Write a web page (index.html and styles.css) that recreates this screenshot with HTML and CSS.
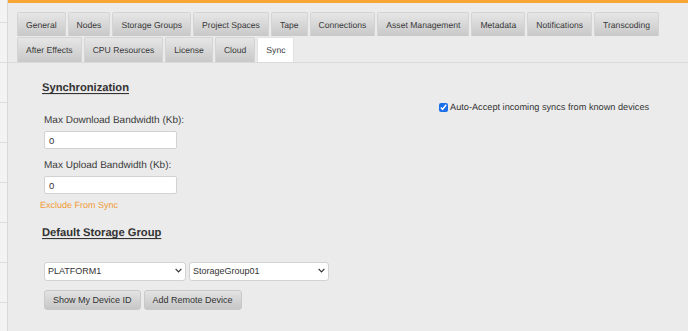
FILE: index.html
```html
<!DOCTYPE html>
<html lang="en">
<head>
    <meta charset="UTF-8" />
    <title>Settings - Sync</title>
    <link rel="stylesheet" href="styles.css">
</head>
<body>
<aside class="sidebar"></aside>

<main>
    <nav class="tabs">
        <div class="tab-row">
            <a class="tab" href="#">General</a>
            <a class="tab" href="#">Nodes</a>
            <a class="tab" href="#">Storage Groups</a>
            <a class="tab" href="#">Project Spaces</a>
            <a class="tab" href="#">Tape</a>
            <a class="tab" href="#">Connections</a>
            <a class="tab" href="#">Asset Management</a>
            <a class="tab" href="#">Metadata</a>
            <a class="tab" href="#">Notifications</a>
            <a class="tab" href="#">Transcoding</a>
        </div>
        <div class="tab-row">
            <a class="tab" href="#">After Effects</a>
            <a class="tab" href="#">CPU Resources</a>
            <a class="tab" href="#">License</a>
            <a class="tab" href="#">Cloud</a>
            <a class="tab active" href="#">Sync</a>
        </div>
    </nav>

    <section class="content">
        <div class="sync-row">
            <div class="sync-fields">
                <h2 class="section-title">Synchronization</h2>
                <label class="field-label first" for="maxDown">Max Download Bandwidth (Kb):</label>
                <input class="field" type="text" id="maxDown" value="0">
                <label class="field-label" for="maxUp">Max Upload Bandwidth (Kb):</label>
                <input class="field" type="text" id="maxUp" value="0">
                <a class="exclude-link" href="#">Exclude From Sync</a>
            </div>
            <label class="auto-accept">
                <input type="checkbox" checked>
                Auto-Accept incoming syncs from known devices
            </label>
        </div>

        <h2 class="section-title storage-title">Default Storage Group</h2>
        <div class="select-row">
            <div class="select-wrap platform">
                <select>
                    <option>PLATFORM1</option>
                </select>
                <svg class="chevron" width="7" height="5" viewBox="0 0 7 5"><path d="M0.6 0.8 L3.5 3.8 L6.4 0.8" fill="none" stroke="#333" stroke-width="1.2"/></svg>
            </div>
            <div class="select-wrap group">
                <select>
                    <option>StorageGroup01</option>
                </select>
                <svg class="chevron" width="7" height="5" viewBox="0 0 7 5"><path d="M0.6 0.8 L3.5 3.8 L6.4 0.8" fill="none" stroke="#333" stroke-width="1.2"/></svg>
            </div>
        </div>
        <div class="button-row">
            <button type="button">Show My Device ID</button>
            <button type="button">Add Remote Device</button>
        </div>
    </section>
</main>
</body>
</html>
```

FILE: styles.css
```css
body {
    font-family: 'Liberation Sans', Arial, sans-serif;
    text-rendering: geometricPrecision;
    margin: 0;
    padding: 0;
    background-color: #ebebeb;
    color: #333;
    display: flex;
    min-height: 100vh;
}

.sidebar {
    width: 7px;
    flex-shrink: 0;
    background-color: #f3f3f3;
    border-right: 1px solid #d9d9d9;
    background-image: repeating-linear-gradient(to bottom, transparent 0, transparent 22px, #dcdcdc 22px, #dcdcdc 23px, transparent 23px, transparent 40px);
}

main {
    flex-grow: 1;
    min-width: 0;
    border-top: 3px solid #f8a531;
    background-color: #ebebeb;
}

.tabs {
    padding: 9px 0 0 9px;
    border-bottom: 1px solid #dadada;
    display: flex;
    flex-direction: column;
    gap: 1px;
}

.tab-row {
    display: flex;
    gap: 2px;
}

.tab {
    display: block;
    flex-shrink: 0;
    white-space: nowrap;
    height: 24px;
    line-height: 24px;
    padding: 0 8px;
    font-size: 8.6px;
    color: #3a3a3a;
    text-decoration: none;
    background: linear-gradient(to bottom, #e6e6e6, #c8c8c8);
    border: 1px solid #d4d4d4;
    border-bottom: none;
    border-radius: 2px 2px 0 0;
    box-sizing: border-box;
}

.tab-row + .tab-row .tab {
    height: 25px;
    line-height: 25px;
}

.tab.active {
    background: #fff;
    border-color: #e2e2e2;
}

.content {
    padding: 18px 0 20px 32px;
}

.sync-row {
    display: flex;
}

.sync-fields {
    flex: 0 0 399px;
    display: flex;
    flex-direction: column;
    align-items: flex-start;
}

.section-title {
    margin: 0 0 0 2px;
    font-size: 11.2px;
    line-height: 14px;
    font-weight: bold;
    color: #333;
    text-decoration: underline;
    text-underline-offset: 2px;
    text-shadow: 0 1px 0 rgba(0,0,0,0.08);
}

.field-label {
    display: block;
    margin: 11px 0 0 4px;
    font-size: 10px;
    line-height: 12px;
    color: #3a3a3a;
}

.field-label.first {
    margin-top: 20px;
}

.field {
    margin: 4px 0 0 4px;
    width: 133px;
    height: 18px;
    padding: 0 4px;
    border: 1px solid #d2d2d2;
    border-radius: 2px;
    background: #fff;
    font-family: inherit;
    font-size: 9.5px;
    color: #333;
    box-sizing: border-box;
}

.exclude-link {
    margin-top: 5px;
    font-size: 9px;
    line-height: 12px;
    color: #ef9a36;
    text-decoration: none;
}

.auto-accept {
    display: flex;
    align-items: center;
    gap: 2px;
    padding-top: 20px;
    height: 12px;
    font-size: 9.2px;
    line-height: 12px;
    color: #333;
    white-space: nowrap;
}

.auto-accept input {
    width: 9px;
    height: 9px;
    margin: 0;
    accent-color: #1a6fe8;
}

.storage-title {
    margin-top: 15px;
}

.select-row {
    display: flex;
    gap: 3px;
    margin: 21px 0 0 4px;
}

.select-wrap {
    position: relative;
}

.select-wrap select {
    appearance: none;
    -webkit-appearance: none;
    height: 19px;
    padding: 0 14px 0 3px;
    border: 1px solid #d2d2d2;
    border-radius: 3px;
    background: #fff;
    font-family: inherit;
    font-size: 9px;
    color: #333;
    box-sizing: border-box;
}

.select-wrap.platform select {
    width: 142px;
}

.select-wrap.group select {
    width: 140px;
}

.chevron {
    position: absolute;
    right: 4px;
    top: 7px;
    pointer-events: none;
}

.button-row {
    display: flex;
    gap: 3px;
    margin: 9px 0 0 4px;
}

button {
    height: 20px;
    padding: 0 8px;
    border: 1px solid #c9c9c9;
    border-radius: 3px;
    background: linear-gradient(to bottom, #e3e3e3, #c6c6c6);
    font-family: inherit;
    font-size: 9px;
    color: #333;
    cursor: pointer;
}

button:hover {
    background: linear-gradient(to bottom, #ececec, #d0d0d0);
}
```
